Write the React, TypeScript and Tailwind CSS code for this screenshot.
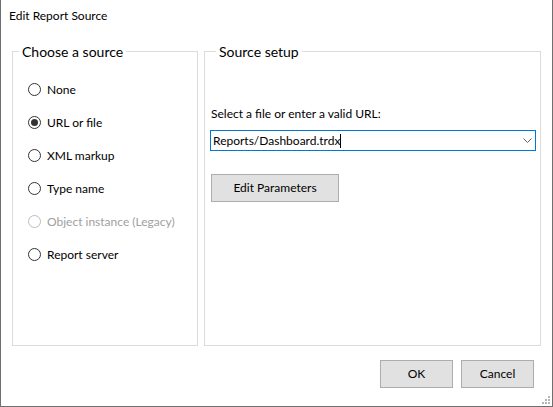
import React from "react";

const sources = [
  { label: "None", checked: false, disabled: false },
  { label: "URL or file", checked: true, disabled: false },
  { label: "XML markup", checked: false, disabled: false },
  { label: "Type name", checked: false, disabled: false },
  { label: "Object instance (Legacy)", checked: false, disabled: true },
  { label: "Report server", checked: false, disabled: false },
];

function Radio({ checked, disabled }: { checked: boolean; disabled: boolean }) {
  return (
    <span
      className={`flex items-center justify-center w-[13px] h-[13px] rounded-full border bg-white ${
        disabled ? "border-[#bcbcbc]" : "border-[#333333]"
      }`}
    >
      {checked && <span className="w-[7px] h-[7px] rounded-full bg-[#333333]" />}
    </span>
  );
}

export default function App() {
  return (
    <div
      className="relative w-[553px] h-[407px] bg-white border-x border-b border-[#6f6f6f] text-[12px] text-black flex flex-col"
      style={{ fontFamily: "Lato, 'Noto Sans', sans-serif" }}
    >
      {/* Title */}
      <div className="h-[31px] pl-[8px] pt-[8px] leading-[16px]">Edit Report Source</div>

      {/* Group boxes */}
      <div className="flex gap-[6px] pl-[11px] pr-[11px] h-[304px] mt-[11px]">
        <fieldset className="w-[186px] border border-[#dcdcdc] pt-[12px]">
          <legend className="ml-[6px] px-[3px] text-[14px] leading-[19px]">Choose a source</legend>
          <div className="flex flex-col pl-[15px]">
            {sources.map((s) => (
              <div key={s.label} className="flex items-center h-[33px] gap-[6px]">
                <Radio checked={s.checked} disabled={s.disabled} />
                <span className={s.disabled ? "text-[#a0a0a0]" : ""}>{s.label}</span>
              </div>
            ))}
          </div>
        </fieldset>

        <fieldset className="flex-1 border border-[#dcdcdc] pl-[5px] pr-[4px]">
          <legend className="ml-[6px] px-[3px] text-[14px] leading-[19px]">Source setup</legend>
          <div className="mt-[45px] pl-[1px] leading-[16px]">Select a file or enter a valid URL:</div>
          <div className="mt-[8px] h-[21px] border border-[#0078d7] flex items-center pl-[2px] pr-[3px]">
            <span className="flex-1 flex items-center">
              Reports/Dashboard.trdx
              <span className="w-px h-[14px] bg-black" />
            </span>
            <svg width="9" height="5" viewBox="0 0 9 5">
              <path d="M0.5 0.5 L4.5 4.5 L8.5 0.5" fill="none" stroke="#606060" strokeWidth="1" />
            </svg>
          </div>
          <button className="mt-[23px] ml-[1px] w-[128px] h-[28px] bg-[#e1e1e1] border border-[#adadad] leading-[16px]">
            Edit Parameters
          </button>
        </fieldset>
      </div>

      {/* Footer */}
      <div className="flex justify-end gap-[8px] pr-[18px] mt-[14px]">
        <button className="w-[73px] h-[28px] bg-[#e1e1e1] border border-[#adadad]">OK</button>
        <button className="w-[73px] h-[28px] bg-[#e1e1e1] border border-[#adadad]">Cancel</button>
      </div>

      {/* Resize grip */}
      <svg className="absolute right-[2px] bottom-[2px]" width="10" height="10" viewBox="0 0 10 10">
        {[
          [8, 2],
          [5, 5],
          [8, 5],
          [2, 8],
          [5, 8],
          [8, 8],
        ].map(([x, y]) => (
          <rect key={`${x}-${y}`} x={x} y={y} width="2" height="2" fill="#b5b5b5" />
        ))}
      </svg>
    </div>
  );
}
